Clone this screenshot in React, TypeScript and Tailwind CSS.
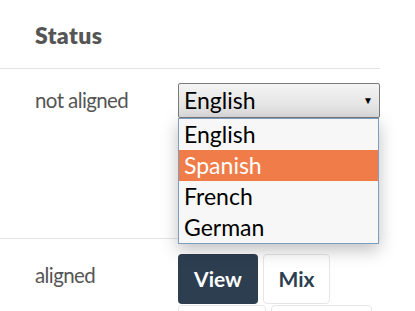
import React from 'react';

const languages = ['English', 'Spanish', 'French', 'German'];

const Cursor = () => (
  <svg className="absolute left-[277px] top-[165px]" width="14" height="20" viewBox="0 0 14 20">
    <path d="M1 1 L1 15 L4.5 11.5 L7 17.5 L9.2 16.6 L6.8 10.8 L11.5 10.8 Z" fill="#fff" stroke="#000" strokeWidth="1" strokeLinejoin="round" />
  </svg>
);

export default function App() {
  const highlighted = 'Spanish';

  return (
    <div className="relative w-[415px] h-[311px] overflow-hidden bg-white text-[#555] font-['Lato','Liberation_Sans',sans-serif]">
      <div className="w-[380px]">
        <div className="h-[69px] border-b border-[#e4e4e4] pl-[35px] pt-[21px]">
          <span className="text-[23px] leading-[28px] font-extrabold tracking-[0.4px]">Status</span>
        </div>

        <div className="h-[170px] border-b border-[#e4e4e4] flex pt-[14px]">
          <div className="w-[178px] pl-[35px] pt-[2px] text-[20.5px] tracking-[-0.6px]">not aligned</div>
          <div className="relative flex-1">
            <div className="h-[35px] flex items-center justify-between pl-[5px] pr-[6px] rounded-[2px] border border-[#7a7a7a] bg-gradient-to-b from-[#f4f4f4] to-[#dcdcdc] text-black text-[23px]">
              <span>English</span>
              <span className="text-[10px]">▼</span>
            </div>
            <div className="absolute left-0 top-[35px] w-[201px] bg-[#f7f7f7] border border-[#7f9dbf] shadow-[0_6px_16px_rgba(0,0,0,0.25)] z-10">
              {languages.map((lang) => (
                <div
                  key={lang}
                  className={
                    lang === highlighted
                      ? 'h-[31px] pl-[5px] flex items-center text-[23px] bg-[#f07c4a] text-white'
                      : 'h-[31px] pl-[5px] flex items-center text-[23px] text-black'
                  }
                >
                  {lang}
                </div>
              ))}
            </div>
          </div>
        </div>

        <div className="flex pt-[15px]">
          <div className="w-[178px] pl-[35px] pt-[6px] text-[20.5px] tracking-[-0.6px]">aligned</div>
          <div className="flex flex-col gap-[1px]">
            <div className="flex gap-[5px]">
              <button className="w-[80px] h-[50px] rounded-[4px] bg-[#2c3e50] text-white text-[21px] font-bold">View</button>
              <button className="w-[67px] h-[50px] rounded-[4px] bg-white border border-[#e6e6e6] text-[#2c3e50] text-[21px] font-bold">Mix</button>
            </div>
            <div className="flex gap-[5px]">
              <div className="w-[88px] h-[30px] rounded-[4px] border border-[#e6e6e6]" />
              <div className="w-[101px] h-[30px] rounded-[4px] border border-[#e6e6e6]" />
            </div>
          </div>
        </div>
      </div>
      <Cursor />
    </div>
  );
}
